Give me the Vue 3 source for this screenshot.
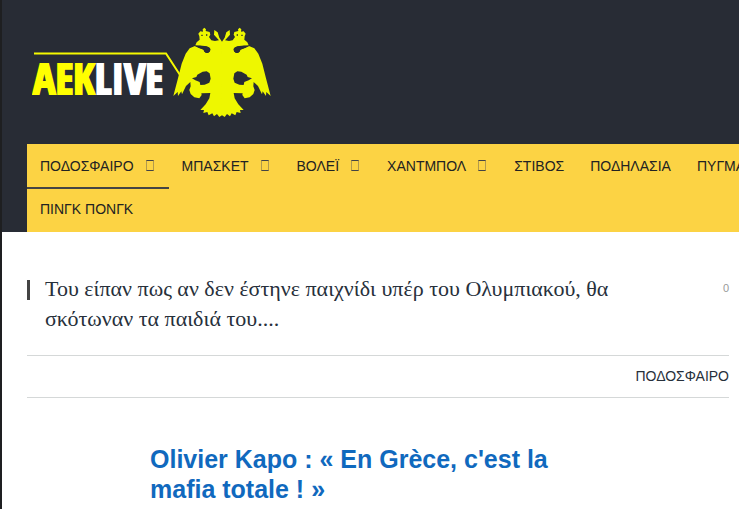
<script setup>
import { ref } from "vue";

const menuRows = ref([
  [
    { name: "ΠΟΔΟΣΦΑΙΡΟ", sub: true, active: true },
    { name: "ΜΠΑΣΚΕΤ", sub: true },
    { name: "ΒΟΛΕΪ", sub: true },
    { name: "ΧΑΝΤΜΠΟΛ", sub: true },
    { name: "ΣΤΙΒΟΣ" },
    { name: "ΠΟΔΗΛΑΣΙΑ" },
    { name: "ΠΥΓΜΑΧΙΑ" },
  ],
  [{ name: "ΠΙΝΓΚ ΠΟΝΓΚ" }],
]);
const comments = ref(0);
</script>

<template>
  <div class="page">
    <header class="header">
      <a href="#" class="logo" aria-label="AEKLIVE">
        <svg width="240" height="92" viewBox="0 0 240 92">
          <path class="logo-line" d="M2 26.5H134L148 48" />
          <text x="1" y="67" class="logo-text">
            <tspan class="logo-aek">AEK</tspan><tspan class="logo-live">LIVE</tspan>
          </text>
          <g transform="translate(128 -12) scale(0.3333)">
            <g id="half">
              <path
                class="eagle"
                d="M187 82L181 80L162 59L163 45L173 52L178 68L187 82V300L178 306L171 297L162 304L157 295L146 301L142 291L130 294L132 285L121 285L137 268L148 250L151 234L124 235L125 240L118 250L103 247L92 237L88 225L92 214L91 201L78 213L66 238L64 229L54 243L53 231L40 243L54 190L65 146L77 116L89 100L105 93Q123 101 131 104Q132 113 142 114Q151 112 151 102Q147 94 130 94L106 91L110 82L119 74L118 64L115 56L121 49L129 50L128 43L133 38L138 43L137 48L149 51L151 59L147 66L154 76L165 78L176 76L187 82Z"
              />
              <path
                class="hole"
                d="M96 190L109 186L112 179L128 170L140 169L149 175L152 191L148 203L134 209L121 210L119 201L106 196Z"
              />
              <path class="hole" d="M124 59h4v4h-4zM138 58h4v4h-4z" />
              <path class="hole" d="M105 93Q120 90 134 93Q147 94 151 102Q151 112 142 114Q132 113 131 104Q120 102 105 93Z" />
            </g>
            <use href="#half" transform="translate(372 0) scale(-1 1)" />
          </g>
        </svg>
      </a>
      <nav class="menu">
        <ul v-for="(row, i) in menuRows" :key="i">
          <li v-for="item in row" :key="item.name">
            <a href="#" :class="{ active: item.active }">
              {{ item.name }}
              <span v-if="item.sub" class="arrow"></span>
            </a>
          </li>
        </ul>
      </nav>
    </header>
    <main class="article">
      <div class="article-head">
        <h1>Του είπαν πως αν δεν έστηνε παιχνίδι υπέρ του Ολυμπιακού, θα σκότωναν τα παιδιά του....</h1>
        <a href="#" class="comments">{{ comments }}</a>
      </div>
      <div class="category">
        <a href="#">ΠΟΔΟΣΦΑΙΡΟ</a>
      </div>
      <h2>Olivier Kapo : « En Grèce, c'est la mafia totale ! »</h2>
    </main>
  </div>
</template>

<style>
body {
  margin: 0;
  background: #fff;
}
</style>

<style scoped>
.page {
  min-height: 100vh;
  box-sizing: border-box;
  border-left: 2px solid #1e1f21;
  overflow: hidden;
  font-family: "Liberation Sans", Arial, sans-serif;
}

a {
  color: inherit;
  text-decoration: none;
}

.header {
  background: #282c35;
  padding: 27px 0 0 25px;
}

.logo {
  display: block;
  padding: 0 0 25px 5px;
}

.logo svg {
  display: block;
}

.logo-line {
  fill: none;
  stroke: #f6fa00;
  stroke-width: 2;
}

.logo-text {
  font-family: "Liberation Sans Narrow", "Arial Narrow", "Open Sans Condensed", sans-serif;
  font-size: 42px;
  font-weight: bold;
  stroke-width: 2px;
}

.logo-aek {
  fill: #ffff00;
  stroke: #ffff00;
}

.logo-live {
  fill: #fff;
  stroke: #fff;
}

.eagle {
  fill: #eef700;
}

.hole {
  fill: #282c35;
}

.menu {
  padding-bottom: 2px;
  background: #fcd344;
  color: #222;
  font-size: 14px;
}

.menu ul {
  display: flex;
  list-style: none;
  margin: 0;
  padding: 0;
}

.menu li {
  flex: none;
}

.menu a {
  position: relative;
  display: flex;
  align-items: center;
  gap: 12px;
  height: 43px;
  padding: 0 13px;
}

.menu a.active::after {
  content: "";
  position: absolute;
  left: 0;
  right: 0;
  bottom: -2px;
  height: 2px;
  background: #444;
}

.arrow {
  box-sizing: border-box;
  width: 8px;
  height: 11px;
  margin-right: 2px;
  border: 1px solid #444;
  border-left-color: #b39a4b;
  border-right-color: #b39a4b;
}

.article {
  padding: 42px 10px 0 25px;
  color: #27303b;
}

.article-head {
  display: flex;
  justify-content: space-between;
  align-items: flex-start;
  padding-bottom: 21px;
  border-bottom: 1px solid #d5d8d8;
}

h1 {
  position: relative;
  max-width: 600px;
  margin: 0;
  padding-left: 18px;
  font-family: "Liberation Serif", "Times New Roman", serif;
  font-size: 22px;
  font-weight: normal;
  line-height: 30px;
}

h1::before {
  content: "";
  position: absolute;
  left: 0;
  top: 6px;
  width: 3px;
  height: 20px;
  background: #444;
}

.comments {
  padding-top: 6px;
  color: #999;
  font-size: 11px;
  line-height: 16px;
}

.category {
  border-bottom: 1px solid #d5d8d8;
  text-align: right;
  font-size: 14px;
  line-height: 41px;
}

h2 {
  max-width: 420px;
  margin: 46px 0 0 123px;
  color: #1069be;
  font-size: 25px;
  line-height: 30px;
}
</style>
